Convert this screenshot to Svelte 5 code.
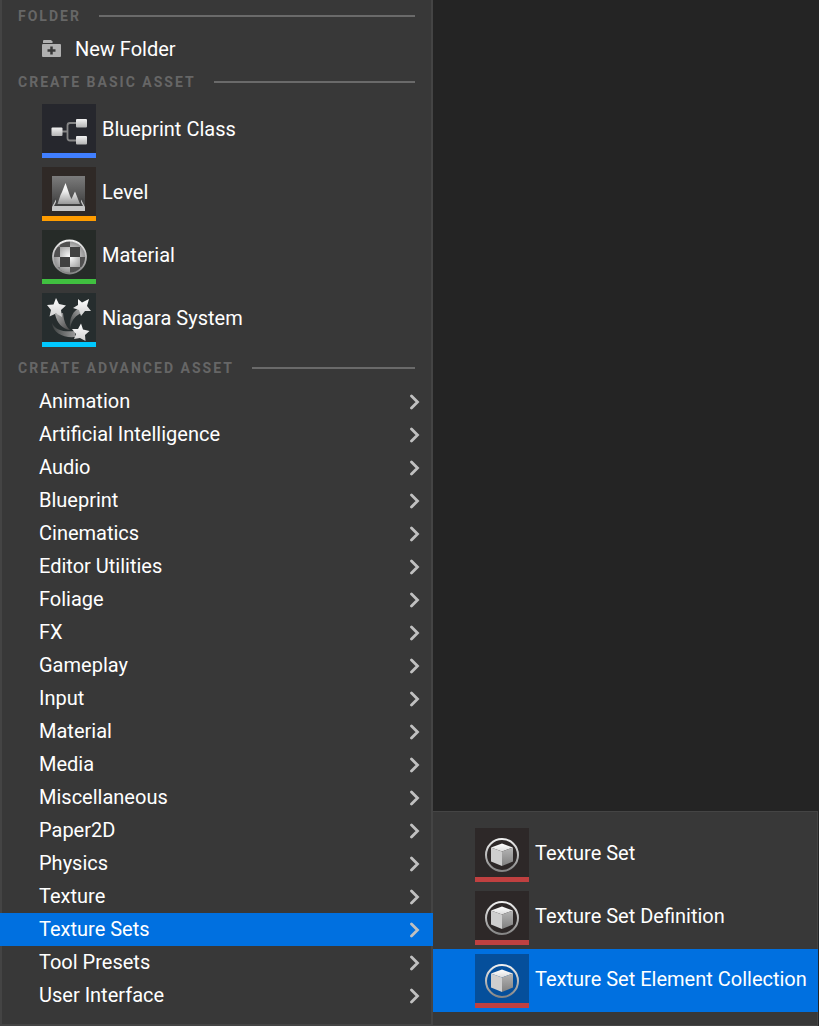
<script>
  const basicAssets = [
    { name: 'Blueprint Class', icon: 'blueprint', tone: 'blue' },
    { name: 'Level', icon: 'level', tone: 'orange' },
    { name: 'Material', icon: 'material', tone: 'green' },
    { name: 'Niagara System', icon: 'niagara', tone: 'cyan' }
  ];
  const categories = [
    'Animation', 'Artificial Intelligence', 'Audio', 'Blueprint', 'Cinematics',
    'Editor Utilities', 'Foliage', 'FX', 'Gameplay', 'Input', 'Material', 'Media',
    'Miscellaneous', 'Paper2D', 'Physics', 'Texture', 'Texture Sets',
    'Tool Presets', 'User Interface'
  ];
  const textureAssets = ['Texture Set', 'Texture Set Definition', 'Texture Set Element Collection'];
  let openCategory = $state('Texture Sets');
  let activeAsset = $state('Texture Set Element Collection');
</script>

<svg class="defs" aria-hidden="true">
  <defs>
    <linearGradient id="silver" x1="0" y1="0" x2="0" y2="1">
      <stop offset="0" stop-color="#f2f2f2" /><stop offset="1" stop-color="#b4b4b4" />
    </linearGradient>
    <linearGradient id="star" x1="0" y1="0" x2="0" y2="1">
      <stop offset="0" stop-color="#fff" /><stop offset="1" stop-color="#d0d0d0" />
    </linearGradient>
    <linearGradient id="ring" x1="0" y1="0" x2="0" y2="1">
      <stop offset="0" stop-color="#f0f0f0" /><stop offset="1" stop-color="#858585" />
    </linearGradient>
    <linearGradient id="sky" x1="0" y1="0" x2="0" y2="1">
      <stop offset="0" stop-color="#7c7c7c" /><stop offset="1" stop-color="#3c3c3c" />
    </linearGradient>
    <linearGradient id="peak" x1="0" y1="0" x2="0" y2="1">
      <stop offset="0" stop-color="#fff" /><stop offset="0.4" stop-color="#eee" /><stop offset="1" stop-color="#999" />
    </linearGradient>
    <linearGradient id="cubeTop" x1="0" y1="0" x2="0" y2="1">
      <stop offset="0" stop-color="#fff" /><stop offset="1" stop-color="#dcdcdc" />
    </linearGradient>
    <linearGradient id="cubeSide" x1="0" y1="0" x2="0" y2="1">
      <stop offset="0" stop-color="#b5b5b5" /><stop offset="1" stop-color="#808080" />
    </linearGradient>
    <linearGradient id="trailLeft" x1="0" y1="0" x2="1" y2="1">
      <stop offset="0" stop-color="#b0b0b0" /><stop offset="1" stop-color="#444" />
    </linearGradient>
    <linearGradient id="trailRight" x1="1" y1="0" x2="0" y2="1">
      <stop offset="0" stop-color="#b0b0b0" /><stop offset="1" stop-color="#3c4040" />
    </linearGradient>
    <linearGradient id="trailLow" x1="0" y1="0" x2="1" y2="0">
      <stop offset="0" stop-color="#3c4040" /><stop offset="1" stop-color="#999" />
    </linearGradient>
    <radialGradient id="ballLight" gradientUnits="userSpaceOnUse" cx="27.500" cy="27" r="17">
      <stop offset="0" stop-color="#fff" /><stop offset="1" stop-color="#8a8a8a" />
    </radialGradient>
    <clipPath id="ball"><circle cx="27.500" cy="27" r="16" /></clipPath>
  </defs>
</svg>

{#snippet assetIcon(kind)}
  <svg viewBox="0 0 54 54" aria-hidden="true">
    {#if kind === 'blueprint'}
      <path d="M20 27.500H25.500M34 19H28Q25.500 19 25.500 21.500V34Q25.500 36.500 28 36.500H34" fill="none" stroke="#858585" stroke-width="1.800" />
      <rect x="9.500" y="23.500" width="11" height="8.500" rx="1" fill="url(#silver)" />
      <rect x="34" y="15" width="11" height="8.500" rx="1" fill="url(#silver)" />
      <rect x="34" y="32" width="11" height="8.500" rx="1" fill="url(#silver)" />
    {:else if kind === 'level'}
      <path d="M10 9H43V40H10Z" fill="url(#sky)" />
      <path d="M15.500 37L18.500 28L20 25L23.500 16L28 29L29.500 32L33 24.500L38 37Z" fill="url(#peak)" />
      <path d="M10 39L14 32V35L12 39H41L39 35V32L43 39V44H10Z" fill="#c6c6c6" />
      <path d="M10 40V35L13 31L14 32ZM43 40V35L40 31L39 32Z" fill="#484848" />
    {:else if kind === 'material'}
      <circle cx="27.500" cy="27" r="16" fill="#414141" />
      <g clip-path="url(#ball)">
        <path d="M18 17H28V27H18ZM28 27H38V37H28ZM10 27H18V37H10ZM38 17H45V27H38ZM18 37H28V45H18ZM28 9H38V17H28Z" fill="url(#ballLight)" />
        <path d="M10 17H18V27H10ZM38 27H45V37H38ZM18 9H28V17H18ZM28 37H38V45H28Z" fill="#505050" />
        <path d="M10 9H18V17H10ZM38 37H45V45H38ZM38 9H45V17H38ZM10 37H18V45H10Z" fill="#777" />
      </g>
      <circle cx="27.500" cy="27" r="16.500" fill="none" stroke="url(#ring)" stroke-width="1.800" />
    {:else if kind === 'niagara'}
      <path d="M13 21C15 30 20 36 28 37C24 33 22 29 21 20Z" fill="url(#trailLeft)" />
      <path d="M28 35C27 26 31 17 38 15L40 20C34 22 30 26 28 35Z" fill="url(#trailRight)" />
      <path d="M10 30C14 38 22 39 33 38V44C21 45 11 40 10 30Z" fill="url(#trailLow)" />
      <path d="M14 5L17 11L24 12.500L19 17L20 24L14 20.500L7.500 23.500L9 17L5 12L11.500 11.500Z" fill="url(#star)" />
      <path d="M36 6L40 9.500L47 6L45 13L49 18L43 18L39 23L37 17L31 15L36 12Z" fill="url(#star)" />
      <path d="M39 30.500L41 36.500L47.500 38L43 42L43.500 48L38 45L32 46L34 41L30 36L36 36Z" fill="url(#star)" />
    {:else}
      <circle cx="27" cy="27" r="16" fill="none" stroke="url(#ring)" stroke-width="2" />
      <path d="M27 15.500L38 19.500L27 23.500L16 19.500Z" fill="url(#cubeTop)" />
      <path d="M16 19.500L27 23.500V38L16 33.500Z" fill="#cecece" />
      <path d="M38 19.500L27 23.500V38L38 33.500Z" fill="url(#cubeSide)" />
    {/if}
  </svg>
{/snippet}

<main>
  <nav class="menu primary" aria-label="Create asset">
    <h2>FOLDER</h2>
    <button class="row folder">
      <svg width="20" height="18" viewBox="0 0 20 18" aria-hidden="true">
        <path d="M1 3V1Q1 0 2 0H9L11 2L10 3Z" fill="#b0b0b0" />
        <path d="M1 4H18Q19 4 19 5V16Q19 17 18 17H1Q0 17 0 16V5Q0 4 1 4Z" fill="#b0b0b0" />
        <path d="M9.500 6.500V14.500M5.500 10.500H13.500" stroke="#383838" stroke-width="2.500" />
      </svg>
      New Folder
    </button>
    <h2>CREATE BASIC ASSET</h2>
    {#each basicAssets as asset}
      <button class="asset">
        <span class="tile {asset.tone}">{@render assetIcon(asset.icon)}</span>
        <span>{asset.name}</span>
      </button>
    {/each}
    <h2 class="advanced">CREATE ADVANCED ASSET</h2>
    {#each categories as category}
      <button
        class="row category"
        class:active={category === openCategory}
        aria-haspopup="menu"
        aria-expanded={category === openCategory}
        onclick={() => (openCategory = category)}
      >
        {category}
        <svg width="10" height="16" viewBox="0 0 10 16" aria-hidden="true">
          <path d="M1.500 2L7.500 8L1.500 14" fill="none" stroke="#c0c0c0" stroke-width="2.800" stroke-linecap="round" />
        </svg>
      </button>
    {/each}
  </nav>
  <nav class="menu submenu" aria-label="Texture Sets">
    {#each textureAssets as asset}
      <button class="asset" class:active={asset === activeAsset} onclick={() => (activeAsset = asset)}>
        <span class="tile red">{@render assetIcon('texture')}</span>
        <span>{asset}</span>
      </button>
    {/each}
  </nav>
</main>

<style>
  :global(body) {
    background: #242424;
  }
  .defs {
    position: absolute;
    width: 0;
    height: 0;
  }
  main {
    display: grid;
    grid-template-columns: 433fr 386fr;
    align-items: end;
    font-family: Roboto, sans-serif;
    font-size: 20px;
    color: #fff;
  }
  .menu {
    background: #383838;
  }
  .primary {
    padding-bottom: 14px;
    box-shadow: inset 2px 0 #444, inset -2px -2px #444;
  }
  .submenu {
    margin-right: 1px;
    padding: 12px 0 14px;
    box-shadow: inset 0 1px #444, inset -1px -1px #444;
  }
  h2 {
    box-sizing: border-box;
    display: flex;
    align-items: center;
    gap: 18px;
    height: 33px;
    margin: 0;
    padding: 0 18px 2px;
    font-size: 14px;
    font-weight: 700;
    letter-spacing: 2px;
    color: #666;
    white-space: nowrap;
  }
  h2::after {
    content: '';
    flex: 1;
    height: 2px;
    background: #6a6a6a;
  }
  .advanced {
    height: 34px;
    padding-bottom: 0;
  }
  button {
    display: flex;
    align-items: center;
    width: 100%;
    margin: 0;
    border: 0;
    background: none;
    color: inherit;
    font: inherit;
    text-align: left;
    white-space: nowrap;
  }
  .row {
    height: 33px;
    padding: 0 13px 2px 39px;
  }
  .folder {
    gap: 13px;
    padding-left: 42px;
  }
  .category {
    justify-content: space-between;
  }
  .category svg {
    margin-top: 2px;
  }
  .asset {
    gap: 6px;
    height: 63px;
    padding: 0 0 0 42px;
  }
  .asset > span:last-child {
    padding-bottom: 4px;
  }
  .active {
    background: #0070e0;
  }
  .tile {
    box-sizing: border-box;
    flex: none;
    width: 54px;
    height: 54px;
    border-bottom: 5px solid;
  }
  .tile svg {
    display: block;
    width: 54px;
    height: 54px;
  }
  .blue { background: #26272d; border-color: #407fff; }
  .orange { background: #2f2926; border-color: #ff9c00; }
  .green { background: #262b28; border-color: #40c040; }
  .cyan { background: #262d2e; border-color: #00c8ff; }
  .red { background: #2d2828; border-color: #c04040; }
  .active .red { background: #054f9b; }
</style>
